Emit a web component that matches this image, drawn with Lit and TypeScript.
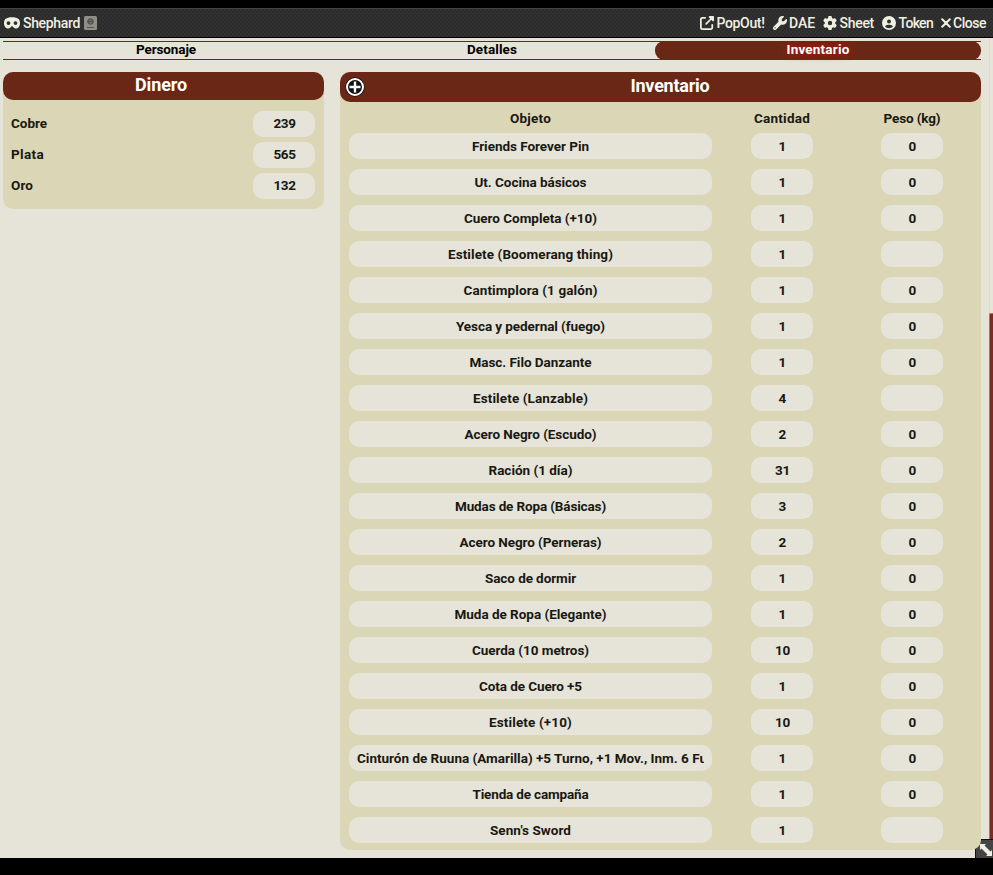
import { LitElement, html, svg, css } from "lit";
import { customElement, property } from "lit/decorators.js";

/** Text run whose tracking is adjusted so it occupies a given width. */
@customElement("fit-text")
class FitText extends LitElement {
  static styles = css`
    :host { display: inline-block; white-space: pre; }
    .run { display: inline-block; }
  `;
  @property() text = "";
  @property({ type: Number }) width = 0;
  render() {
    return html`<span class="run">${this.text}</span>`;
  }
  updated() {
    const run = this.renderRoot.querySelector(".run") as HTMLElement;
    run.style.letterSpacing = "0px";
    const natural = run.getBoundingClientRect().width;
    if (this.width && natural) {
      const step = (this.width - natural) / this.text.length;
      run.style.letterSpacing = `${step.toFixed(3)}px`;
    }
  }
}

const ICONS: Record<string, string> = {
  popout:
    "M352 0c-12.9 0-24.6 7.8-29.6 19.8s-2.2 25.7 6.9 34.9L370.7 96 201.4 265.4c-12.5 12.5-12.5 32.8 0 45.3s32.8 12.5 45.3 0L416 141.3l41.4 41.4c9.2 9.2 22.9 11.9 34.9 6.9s19.8-16.6 19.8-29.6V32c0-17.7-14.3-32-32-32H352zM80 32C35.8 32 0 67.8 0 112V432c0 44.2 35.8 80 80 80H400c44.2 0 80-35.8 80-80V320c0-17.7-14.3-32-32-32s-32 14.3-32 32V432c0 8.8-7.2 16-16 16H80c-8.8 0-16-7.2-16-16V112c0-8.8 7.2-16 16-16H192c17.7 0 32-14.3 32-32s-14.3-32-32-32H80z",
  wrench:
    "M352 320c88.4 0 160-71.6 160-160c0-15.3-2.2-30.1-6.2-44.2c-3.1-10.8-16.4-13.2-24.3-5.3l-76.8 76.8c-3 3-7.1 4.7-11.3 4.7H336c-8.8 0-16-7.2-16-16V118.6c0-4.2 1.7-8.3 4.7-11.3l76.8-76.8c7.9-7.9 5.4-21.2-5.3-24.3C382.1 2.2 367.3 0 352 0C263.6 0 192 71.6 192 160c0 19.1 3.4 37.5 9.5 54.5L19.9 396.1C7.2 408.8 0 426.1 0 444.1C0 481.6 30.4 512 67.9 512c18 0 35.3-7.2 48-19.9L297.5 310.5c17 6.2 35.4 9.5 54.5 9.5zM80 408a24 24 0 1 1 0 48 24 24 0 1 1 0-48z",
  gear:
    "M495.9 166.6c3.2 8.7 .5 18.4-6.4 24.6l-43.3 39.4c1.1 8.3 1.7 16.8 1.7 25.4s-.6 17.1-1.7 25.4l43.3 39.4c6.9 6.2 9.6 15.9 6.4 24.6c-4.4 11.9-9.7 23.3-15.8 34.3l-4.7 8.1c-6.6 11-14 21.4-22.1 31.2c-5.9 7.2-15.7 9.6-24.5 6.8l-55.7-17.7c-13.4 10.3-28.2 18.9-44 25.4l-12.5 57.1c-2 9.1-9 16.3-18.2 17.8c-13.8 2.3-28 3.5-42.5 3.5s-28.7-1.2-42.5-3.5c-9.2-1.5-16.2-8.7-18.2-17.8l-12.5-57.1c-15.8-6.5-30.6-15.1-44-25.4L83.1 425.9c-8.8 2.8-18.6 .3-24.5-6.8c-8.1-9.8-15.5-20.2-22.1-31.2l-4.7-8.1c-6.1-11-11.4-22.4-15.8-34.3c-3.2-8.7-.5-18.4 6.4-24.6l43.3-39.4C64.6 273.1 64 264.6 64 256s.6-17.1 1.7-25.4L22.4 191.2c-6.9-6.2-9.6-15.9-6.4-24.6c4.4-11.9 9.7-23.3 15.8-34.3l4.7-8.1c6.6-11 14-21.4 22.1-31.2c5.9-7.2 15.7-9.6 24.5-6.8l55.7 17.7c13.4-10.3 28.2-18.9 44-25.4l12.5-57.1c2-9.1 9-16.3 18.2-17.8C227.3 1.2 241.5 0 256 0s28.7 1.2 42.5 3.5c9.2 1.5 16.2 8.7 18.2 17.8l12.5 57.1c15.8 6.5 30.6 15.1 44 25.4l55.7-17.7c8.8-2.8 18.6-.3 24.5 6.8c8.1 9.8 15.5 20.2 22.1 31.2l4.7 8.1c6.1 11 11.4 22.4 15.8 34.3zM256 336a80 80 0 1 0 0-160 80 80 0 1 0 0 160z",
  user:
    "M399 384.2C376.9 345.8 335.4 320 288 320H224c-47.4 0-88.9 25.8-111 64.2c35.2 39.2 86.2 63.8 143 63.8s107.8-24.7 143-63.8zM0 256a256 256 0 1 1 512 0A256 256 0 1 1 0 256zm256 16a72 72 0 1 0 0-144 72 72 0 1 0 0 144z",
};

const icon = (name: string) => html`<svg class="icon" viewBox="0 0 512 512">${svg`<path d=${ICONS[name]} />`}</svg>`;

const CONTROLS = [
  { icon: "popout", label: "PopOut!", width: 48 },
  { icon: "wrench", label: "DAE", width: 26 },
  { icon: "gear", label: "Sheet", width: 34.5 },
  { icon: "user", label: "Token", width: 34.5 },
];

const COINS = [
  { name: "Cobre", width: 36, amount: "239" },
  { name: "Plata", width: 33, amount: "565" },
  { name: "Oro", width: 22, amount: "132" },
];

const ITEMS: [string, number, string, string][] = [
  ["Friends Forever Pin", 117, "1", "0"],
  ["Ut. Cocina básicos", 112, "1", "0"],
  ["Cuero Completa (+10)", 133, "1", "0"],
  ["Estilete (Boomerang thing)", 165, "1", ""],
  ["Cantimplora (1 galón)", 134, "1", "0"],
  ["Yesca y pedernal (fuego)", 149, "1", "0"],
  ["Masc. Filo Danzante", 122, "1", "0"],
  ["Estilete (Lanzable)", 115, "4", ""],
  ["Acero Negro (Escudo)", 132, "2", "0"],
  ["Ración (1 día)", 84, "31", "0"],
  ["Mudas de Ropa (Básicas)", 151, "3", "0"],
  ["Acero Negro (Perneras)", 142, "2", "0"],
  ["Saco de dormir", 91, "1", "0"],
  ["Muda de Ropa (Elegante)", 152, "1", "0"],
  ["Cuerda (10 metros)", 117, "10", "0"],
  ["Cota de Cuero +5", 103, "1", "0"],
  ["Estilete (+10)", 83, "10", "0"],
  ["Cinturón de Ruuna (Amarilla) +5 Turno, +1 Mov., Inm. 6 Fu", 350, "1", "0"],
  ["Tienda de campaña", 116, "1", "0"],
  ["Senn's Sword", 81, "1", ""],
];

@customElement("app-root")
class AppRoot extends LitElement {
  static styles = css`
    :host {
      display: block; box-sizing: border-box; height: 875px; padding: 8px 0 17px;
      background: #000; overflow: hidden;
      font: 700 13.5px/18px Roboto, "Open Sans", sans-serif; color: #191813;
    }
    * { box-sizing: border-box; }
    .window { height: 850px; position: relative; display: flex; flex-direction: column; background: #e6e4d9; }
    .titlebar {
      height: 30px; flex: none; display: flex; align-items: center; padding: 0 7px 0 4px;
      color: #f0f0e0; font-weight: 500; font-size: 14px;
      border-top: 1px solid #444; border-bottom: 1px solid #000;
      background: repeating-conic-gradient(#2b2b2b 0 25%, #323232 0 50%) 0 0 / 4px 4px;
    }
    .title { display: flex; align-items: center; flex: 1; }
    .mask { width: 16px; height: 12px; margin-right: 3px; }
    .badge { width: 13px; height: 14px; margin-left: 4px; }
    .controls { display: flex; align-items: center; }
    .control { display: flex; align-items: center; gap: 2.5px; margin-left: 8px; }
    .control.close { gap: 2px; }
    .icon { width: 14px; height: 14px; fill: currentColor; display: block; }
    .control .icon.cross { width: 10px; height: 10px; fill: none; stroke: currentColor; }
    .sheet { flex: 1; padding: 3px 12px 0 3px; }
    .tabs { display: flex; height: 19px; border: 1px solid #6a2715; border-width: 1px 0; color: #000; }
    .tab { flex: 1; margin: -1px 0; padding-bottom: 3px; display: flex; justify-content: center; align-items: center; }
    .tab.active { background: #6a2715; color: #fff; border-radius: 9px; text-shadow: 0 0 10px #f00; }
    .body { display: flex; align-items: flex-start; gap: 16px; margin-top: 12px; }
    .panel { background: #dbd6b5; border-radius: 10px; position: relative; z-index: 1; }
    .money { width: 321px; height: 137px; }
    .inventory { flex: 1; height: 778px; }
    .head {
      display: flex; align-items: center; justify-content: center; position: relative;
      height: 28px; padding: 0 5px 2px 0; border-radius: 10px; background: #6a2715; color: #fff; font-size: 18px;
    }
    .inventory .head { height: 30px; padding: 0 0 2px 19px; }
    .head .plus { position: absolute; left: 5px; top: 5px; width: 20px; height: 20px; }
    .pill {
      height: 26px; border-radius: 10px; background: #e6e4d9; overflow: hidden;
      display: flex; align-items: center; justify-content: center;
    }
    .small { width: 62px; padding-left: 1px; }
    .coins { display: flex; flex-direction: column; gap: 5px; padding: 11px 9px 0 8px; }
    .coin { display: flex; align-items: center; justify-content: space-between; }
    .coin fit-text { margin-bottom: 2px; }
    .row { display: grid; grid-template-columns: 363px 135px 130px; padding-left: 9px; height: 26px; margin-bottom: 10px; }
    .cell { display: flex; justify-content: center; align-items: center; }
    .cell.qty { padding-left: 5px; }
    .row.labels { height: 31px; margin: 0; padding-top: 1px; }
    .name { width: 363px; }
    .clip { display: flex; width: 347px; overflow: hidden; justify-content: safe center; }
    .track { position: absolute; right: 0; top: 31px; bottom: 0; width: 4px; border-left: 1px solid #dddbd0; }
    .thumb { position: absolute; right: 0; top: 305px; bottom: 0; width: 4px; background: #782e22; border: 1px solid #e8660f; border-width: 1px 0 0 1px; border-radius: 2px 0 0 0; }
    .resize { position: absolute; right: 0; bottom: 0; width: 18px; height: 19px; background: #444; border-top: 1px solid #111; border-left: 1px solid #111; }
    .resize svg { display: block; width: 12px; height: 12px; margin: 4px 0 0 4px; fill: #f0f0e0; }
  `;

  render() {
    return html`
      <div class="window">
        <header class="titlebar">
          <div class="title">
            <svg class="mask" viewBox="0 0 16 12">
              <path fill="#f0f0e0" fill-rule="evenodd" d="M8 .3C2 .3 0 2.500 0 6c0 3.700 2 5.500 4.500 5.500C6.500 11.500 7 9 8 9s1.500 2.500 3.500 2.500C14 11.500 16 9.700 16 6c0-3.500-2-5.700-8-5.700zM4.500 4.200a1.900 1.900 0 1 1 0 3.800 1.900 1.900 0 0 1 0-3.800zm7 0a1.900 1.900 0 1 1 0 3.800 1.900 1.900 0 0 1 0-3.800z" />
            </svg>
            <fit-text text="Shephard" width="57"></fit-text>
            <svg class="badge" viewBox="0 0 13 14">
              <rect width="13" height="14" rx="1.500" fill="#8f8f88" />
              <g fill="none" stroke="#4c4c47"><circle cx="6.500" cy="5.500" r="2.800" fill="#6c6c66" /><path d="M4 5.500h5M3 11.500h7" stroke-width=".9" /></g>
            </svg>
          </div>
          <nav class="controls">
            ${CONTROLS.map((c) => html`<span class="control">${icon(c.icon)}<fit-text .text=${c.label} .width=${c.width}></fit-text></span>`)}
            <span class="control close">
              <svg class="icon cross" viewBox="0 0 10 10"><path d="M1.200 1.200l7.600 7.600M8.800 1.200L1.200 8.800" stroke-width="2" stroke-linecap="round" /></svg>
              <fit-text text="Close" width="33"></fit-text>
            </span>
          </nav>
        </header>
        <main class="sheet">
          <nav class="tabs">
            <span class="tab"><fit-text text="Personaje" width="60"></fit-text></span>
            <span class="tab"><fit-text text="Detalles" width="50"></fit-text></span>
            <span class="tab active"><fit-text text="Inventario" width="63"></fit-text></span>
          </nav>
          <div class="body">
            <section class="panel money">
              <div class="head"><fit-text text="Dinero" width="52"></fit-text></div>
              <div class="coins">
                ${COINS.map((c) => html`<div class="coin">
                  <fit-text .text=${c.name} .width=${c.width}></fit-text>
                  <span class="pill small"><fit-text .text=${c.amount} width="22"></fit-text></span>
                </div>`)}
              </div>
            </section>
            <section class="panel inventory">
              <div class="head">
                <svg class="plus" viewBox="0 0 20 20">
                  <circle cx="10" cy="10" r="9.700" fill="#111" />
                  <circle cx="10" cy="10" r="8" fill="#111" stroke="#fff" stroke-width="2" />
                  <path d="M10 4.500v11M4.500 10h11" stroke="#fff" stroke-width="2.400" />
                </svg>
                <fit-text text="Inventario" width="79"></fit-text>
              </div>
              <div class="row labels">
                <div class="cell"><fit-text text="Objeto" width="41"></fit-text></div>
                <div class="cell qty"><fit-text text="Cantidad" width="56"></fit-text></div>
                <div class="cell weight"><fit-text text="Peso (kg)" width="57"></fit-text></div>
              </div>
              ${ITEMS.map(([name, width, qty, weight]) => html`<div class="row">
                <div class="cell"><span class="pill name"><span class="clip"><fit-text .text=${name} .width=${width}></fit-text></span></span></div>
                <div class="cell qty"><span class="pill small"><fit-text .text=${qty} .width=${qty.length > 1 ? 15 : 8}></fit-text></span></div>
                <div class="cell weight"><span class="pill small"><fit-text .text=${weight} width="8"></fit-text></span></div>
              </div>`)}
            </section>
          </div>
        </main>
        <div class="track"></div>
        <div class="thumb"></div>
        <div class="resize"><svg viewBox="0 0 12 12"><path d="M0 0h6L4.500 1.500l6 6L12 6v6H6l1.500-1.500-6-6L0 6z" /></svg></div>
      </div>
    `;
  }
}
